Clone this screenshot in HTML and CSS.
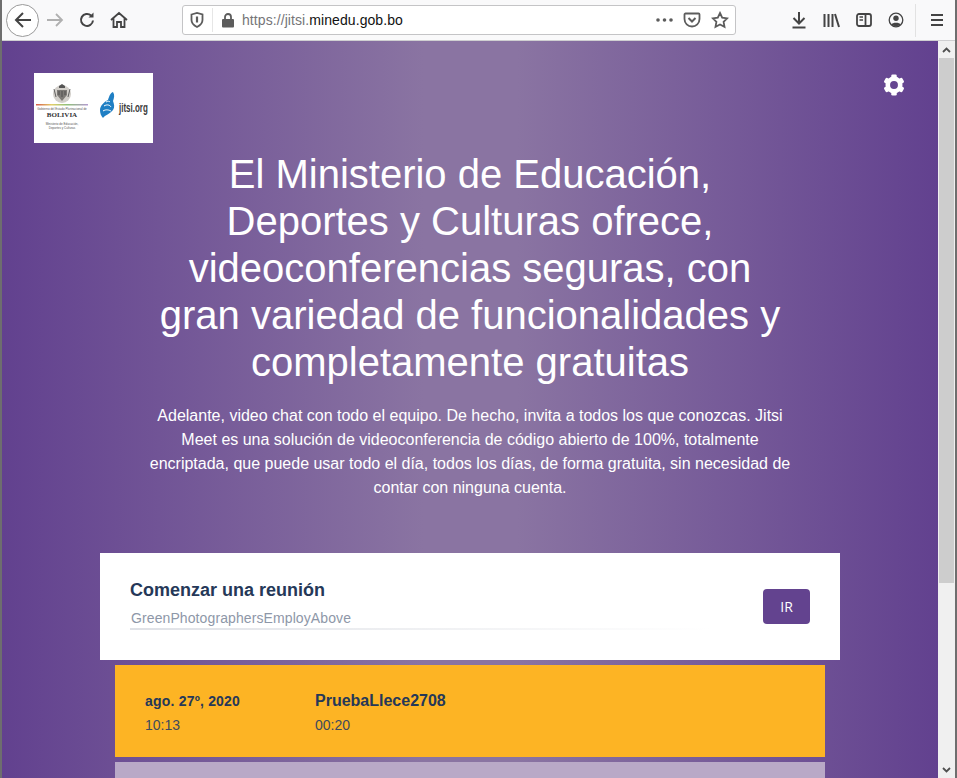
FILE: index.html
```html
<!DOCTYPE html>
<html lang="es">
<head>
  <meta charset="UTF-8">
  <title>Jitsi Meet</title>
  <link rel="stylesheet" href="styles.css">
</head>
<body>

<div class="toolbar">
  <div class="nav-buttons">
    <span class="back-btn">
      <svg width="20" height="20" viewBox="0 0 20 20" fill="none" stroke="#444" stroke-width="2"><path d="M18 10H3M10 3l-7 7 7 7"/></svg>
    </span>
    <svg class="nav-icon" width="18" height="18" viewBox="0 0 18 18" fill="none" stroke="#b0b0b0" stroke-width="1.8"><path d="M1 9h15M10 3l6 6-6 6"/></svg>
    <svg class="nav-icon" width="18" height="18" viewBox="0 0 18 18" fill="none" stroke="#444" stroke-width="2"><path d="M15 9.500a6 6 0 1 1-1.900-5"/><path d="M15.500 1.500v5h-5z" fill="#444" stroke="none"/></svg>
    <svg class="nav-icon" width="18" height="18" viewBox="0 0 18 18" fill="none" stroke="#444" stroke-width="1.800"><path d="M1 9l8-7 8 7M3.500 7.500V16h3.500v-5h4v5h3.500V7.500"/></svg>
  </div>

  <div class="urlbar">
    <svg width="14" height="16" viewBox="0 0 14 16" fill="none" stroke="#5c5c5c" stroke-width="1.800"><path d="M1.500 2.500L7 1l5.500 1.500V8c0 3-2.500 5.500-5.500 7C4 13.500 1.500 11 1.500 8z"/><path d="M7 4.500v6" stroke-width="2.200"/></svg>
    <span class="url-sep"></span>
    <svg width="14" height="16" viewBox="0 0 14 16"><path d="M4 7V5a3 3 0 0 1 6 0v2" fill="none" stroke="#5c5c5c" stroke-width="1.800"/><rect x="1" y="7" width="12" height="8.500" rx="1" fill="#5c5c5c"/></svg>
    <span class="url-text"><span class="url-dim">https://jitsi.</span>minedu.gob.bo</span>
    <svg width="17" height="4" viewBox="0 0 17 4" fill="#5c5c5c"><circle cx="2" cy="2" r="1.800"/><circle cx="8.500" cy="2" r="1.800"/><circle cx="15" cy="2" r="1.800"/></svg>
    <svg class="url-action" width="18" height="16" viewBox="0 0 18 16" fill="none" stroke="#5c5c5c" stroke-width="1.800"><path d="M2.500 1.500h13a1 1 0 0 1 1 1V7a7.500 7.500 0 0 1-15 0V2.500a1 1 0 0 1 1-1z"/><path d="M5.500 6L9 9.500 12.500 6" stroke-width="2"/></svg>
    <svg class="url-action" width="18" height="18" viewBox="0 0 18 18" fill="none" stroke="#5c5c5c" stroke-width="1.800"><path d="M9 2l2.200 4.600 5 .7-3.600 3.500.9 5L9 13.400l-4.500 2.400.9-5L1.800 7.300l5-.7z"/></svg>
  </div>

  <div class="tool-icons">
    <svg width="16" height="18" viewBox="0 0 16 18" fill="none" stroke="#444" stroke-width="2"><path d="M8 1v11M2.500 7L8 12.500 13.500 7M1.500 16.500h13"/></svg>
    <svg width="17" height="16" viewBox="0 0 17 16" fill="none" stroke="#444" stroke-width="2"><path d="M1.500 2v13M5.500 2v13M9.500 2v13M12 2l4 13"/></svg>
    <svg width="16" height="14" viewBox="0 0 16 14" fill="none" stroke="#444" stroke-width="1.800"><rect x="1" y="1" width="14" height="12" rx="2"/><path d="M9.500 1v12"/><path d="M3.500 4h3.500M3.500 7h3.500" stroke-width="1.300"/></svg>
    <svg width="16" height="16" viewBox="0 0 16 16"><circle cx="8" cy="8" r="6.800" fill="none" stroke="#444" stroke-width="1.300"/><circle cx="8" cy="6.300" r="2.700" fill="#444"/><path d="M3.300 12.500c1-2.400 8.400-2.400 9.400 0-2.400 2.200-7 2.200-9.400 0z" fill="#444"/></svg>
    <span class="tool-sep"></span>
    <svg class="menu-icon" width="14" height="12" viewBox="0 0 14 12" fill="none" stroke="#444" stroke-width="2"><path d="M1 1h12M1 6h12M1 11h12"/></svg>
  </div>
</div>

<div class="viewport">
  <main class="page">
    <div class="header-row">
      <div class="logo">
        <svg width="119" height="70" viewBox="0 0 119 70">
          <defs>
            <linearGradient id="flag">
              <stop offset="0" stop-color="#d65a4a"/>
              <stop offset="0.3" stop-color="#e3cf6a"/>
              <stop offset="0.6" stop-color="#8fc07a"/>
              <stop offset="1" stop-color="#b49ad0"/>
            </linearGradient>
          </defs>
          <circle cx="28" cy="21" r="9" fill="#d2cfca"/>
          <path d="M25 13l3-2 3 2v2h-6z" fill="#555"/>
          <path d="M23 17h10v5l-5 6-5-6z" fill="#7d7a76"/>
          <path d="M25 18v4M28 18v6M31 18v4M20 16l2 8M36 16l-2 8" fill="none" stroke="#444" stroke-width="0.800"/>
          <rect x="2" y="31" width="52" height="1.500" fill="url(#flag)"/>
          <text class="logo-tiny" x="28" y="37" text-anchor="middle">Gobierno del Estado Plurinacional de</text>
          <text class="logo-name" x="28" y="43.500" text-anchor="middle">BOLIVIA</text>
          <text class="logo-tiny" x="28" y="52" text-anchor="middle">Ministerio de Educación,</text>
          <text class="logo-tiny" x="28" y="56" text-anchor="middle">Deportes y Culturas</text>
          <path d="M79 19c-3 1-4 5-5 8-4 2-8 6-8 10 0 3 1 6 3 8 2-3 7-4 10-8 2-3 1-6 0-9 1-3 2-6 0-9z" fill="#1f7fc4"/>
          <path d="M70 33c3-2 6-1 7 1M69 38c3-2 6-1 8 0M72 29c2-1 3-1 4 0" fill="none" stroke="#fff" stroke-width="1"/>
          <text class="logo-jitsi" transform="translate(85 38.500) scale(0.665 1)">jitsi.org</text>
        </svg>
      </div>
      <svg class="gear" width="22" height="22" viewBox="0 0 24 24" fill="#fff">
        <circle cx="12" cy="12" r="6.800" fill="none" stroke="#fff" stroke-width="5"/>
        <rect x="9" y="0.500" width="6" height="6" rx="1.500"/>
        <rect x="9" y="0.500" width="6" height="6" rx="1.500" transform="rotate(60 12 12)"/>
        <rect x="9" y="0.500" width="6" height="6" rx="1.500" transform="rotate(120 12 12)"/>
        <rect x="9" y="0.500" width="6" height="6" rx="1.500" transform="rotate(180 12 12)"/>
        <rect x="9" y="0.500" width="6" height="6" rx="1.500" transform="rotate(240 12 12)"/>
        <rect x="9" y="0.500" width="6" height="6" rx="1.500" transform="rotate(300 12 12)"/>
      </svg>
    </div>

    <h1 class="title">El Ministerio de Educación, Deportes y Culturas ofrece, videoconferencias seguras, con gran variedad de funcionalidades y completamente gratuitas</h1>
    <p class="subtitle">Adelante, video chat con todo el equipo. De hecho, invita a todos los que conozcas. Jitsi Meet es una solución de videoconferencia de código abierto de 100%, totalmente encriptada, que puede usar todo el día, todos los días, de forma gratuita, sin necesidad de contar con ninguna cuenta.</p>

    <div class="start-card">
      <div class="start-form">
        <div class="start-title">Comenzar una reunión</div>
        <div class="start-input">GreenPhotographersEmployAbove</div>
      </div>
      <button class="go-btn">IR</button>
    </div>

    <div class="meetings">
      <div class="meeting-row">
        <div class="meeting-date">
          <div class="date-main">ago. 27º, 2020</div>
          <div class="meeting-sub">10:13</div>
        </div>
        <div class="meeting-info">
          <div class="meeting-name">PruebaLlece2708</div>
          <div class="meeting-sub">00:20</div>
        </div>
      </div>
      <div class="meeting-row faded"></div>
    </div>
  </main>

  <div class="scrollbar">
    <svg class="scroll-arrow" width="9" height="6" viewBox="0 0 9 6" fill="none" stroke="#505050" stroke-width="1.800"><path d="M1 5l3.500-3.500L8 5"/></svg>
    <div class="scroll-thumb"></div>
    <svg class="scroll-arrow scroll-down" width="9" height="6" viewBox="0 0 9 6" fill="none" stroke="#505050" stroke-width="1.800"><path d="M1 1l3.500 3.500L8 1"/></svg>
  </div>
</div>

</body>
</html>
```

FILE: styles.css
```css
* {
  box-sizing: border-box;
}

html, body {
  margin: 0;
  height: 100%;
  overflow: hidden;
}

body {
  display: flex;
  flex-direction: column;
  height: 778px;
  font-family: "Liberation Sans", Arial, sans-serif;
  background: #f9f9fa;
  border-left: 2px solid #6e6e6e;
  border-right: 2px solid #6e6e6e;
}

/* browser chrome */
.toolbar {
  display: flex;
  align-items: center;
  height: 41px;
  flex-shrink: 0;
  background: #f9f9fa;
  border-bottom: 1px solid #cfcfd1;
}

.nav-buttons {
  display: flex;
  align-items: center;
  width: 180px;
  flex-shrink: 0;
  padding-left: 4px;
  gap: 14px;
}

.nav-buttons .nav-icon:nth-child(2) {
  margin-left: -7px;
}

.back-btn {
  display: flex;
  align-items: center;
  justify-content: center;
  width: 33px;
  height: 33px;
  background: #fff;
  border: 1px solid #9a9a9a;
  border-radius: 50%;
}

.urlbar {
  display: flex;
  align-items: center;
  width: 554px;
  height: 30px;
  flex-shrink: 0;
  padding: 0 6px 0 7px;
  background: #fff;
  border: 1px solid #c4c4c6;
  border-radius: 3px;
  gap: 8px;
}

.url-sep {
  width: 1px;
  height: 24px;
  background: #e6e6e6;
}

.url-text {
  flex: 1;
  font-size: 14px;
  letter-spacing: 0.08px;
  color: #111;
  margin-left: -1px;
}

.url-dim {
  color: #757578;
}

.url-action {
  margin-left: 2px;
}

.tool-icons {
  display: flex;
  align-items: center;
  flex: 1;
  padding-left: 55px;
  gap: 16px;
}

.tool-sep {
  width: 1px;
  height: 33px;
  background: #e2e2e2;
  margin-left: -5px;
}

.menu-icon {
  margin-left: -2px;
}

/* page */
.viewport {
  display: flex;
  flex: 1;
  min-height: 0;
}

.page {
  flex: 1;
  min-width: 0;
  padding-top: 32px;
  overflow: hidden;
  background: linear-gradient(90deg, #62418f 0%, #8a74a2 45%, #8a74a2 55%, #62418f 100%);
}

.header-row {
  display: flex;
  justify-content: space-between;
  align-items: flex-start;
  padding: 0 33px 0 32px;
}

.logo {
  width: 119px;
  height: 70px;
  background: #fff;
}

.logo-tiny {
  font-size: 3px;
  fill: #555;
}

.logo-name {
  font-family: "Liberation Serif", serif;
  font-size: 7px;
  font-weight: bold;
  fill: #333;
}

.logo-jitsi {
  font-size: 12px;
  font-weight: bold;
  fill: #3a3a3a;
}

.gear {
  margin-top: 1px;
}

.title {
  width: 640px;
  margin: 8px auto 0;
  font-size: 40px;
  font-weight: normal;
  line-height: 47px;
  text-align: center;
  color: #fff;
}

.subtitle {
  width: 660px;
  margin: 18px auto 0;
  font-size: 16px;
  line-height: 24px;
  text-align: center;
  color: #fff;
}

.start-card {
  display: flex;
  align-items: center;
  justify-content: space-between;
  width: 740px;
  height: 107px;
  margin: 53px auto 0;
  padding: 0 30px;
  background: #fff;
}

.start-form {
  width: 580px;
  margin-bottom: 5px;
}

.start-title {
  font-size: 18px;
  font-weight: bold;
  line-height: 24px;
  color: #253858;
}

.start-input {
  padding: 7px 1px 1px;
  font-size: 14px;
  letter-spacing: 0.1px;
  line-height: 18px;
  color: #8e97a8;
  border-bottom: 2px solid;
  border-image: linear-gradient(90deg, #dfe1e6, #fff) 1;
}

.go-btn {
  width: 47px;
  height: 35px;
  padding: 0;
  font-family: "Open Sans", "Liberation Sans", sans-serif;
  font-size: 14px;
  color: #fff;
  background: #63438f;
  border: none;
  border-radius: 4px;
}

.meetings {
  display: flex;
  flex-direction: column;
  width: 710px;
  margin: 5px auto 0;
  gap: 5px;
}

.meeting-row {
  display: flex;
  align-items: center;
  height: 92px;
  flex-shrink: 0;
  padding: 3px 30px 0;
  background: #fdb424;
  color: #253858;
}

.meeting-row.faded {
  background: #b9a9c7;
}

.meeting-date {
  width: 170px;
}

.date-main {
  font-size: 14px;
  font-weight: bold;
  letter-spacing: 0.2px;
  line-height: 20px;
}

.meeting-name {
  font-size: 16px;
  font-weight: bold;
  line-height: 20px;
}

.meeting-sub {
  margin-top: 4px;
  font-size: 14px;
  line-height: 20px;
  color: #3d4a5e;
}

.scrollbar {
  display: flex;
  flex-direction: column;
  align-items: center;
  width: 17px;
  flex-shrink: 0;
  background: #f0f0f0;
}

.scroll-arrow {
  margin: 6px 0 5px;
}

.scroll-thumb {
  width: 15px;
  height: 525px;
  background: #cdcdcd;
}

.scroll-down {
  margin: auto 0 5px;
}
```
